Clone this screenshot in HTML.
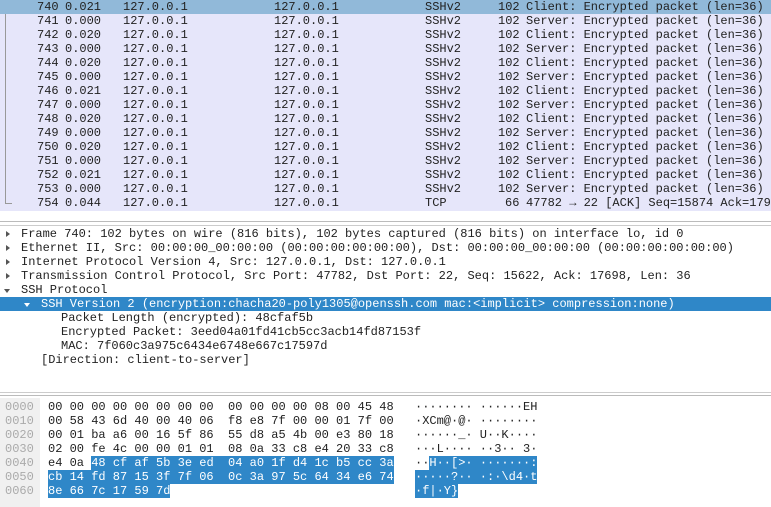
<!DOCTYPE html><html><head><style>
body{margin:0;width:771px;height:507px;overflow:hidden;background:#fff;font-family:"Liberation Mono",monospace;font-size:12px;color:#222}
.r{position:absolute;left:0;width:771px;height:14px;line-height:14px;white-space:pre}
.sel{background:#91b9d9}
.c{position:absolute;top:0}
.hl{background:#2f87c8;color:#fff}
.off{color:#aaa}
.tri{position:absolute;width:0;height:0}
</style></head><body>
<div style="position:absolute;left:0;top:0;width:771px;height:211px;background:#e6e6fa"></div>
<div id="pl"></div>
<div style="position:absolute;left:5px;top:14px;width:1px;height:190px;background:#999"></div>
<div style="position:absolute;left:5px;top:203px;width:7px;height:1px;background:#999"></div>
<div style="position:absolute;left:0;top:221px;width:771px;height:1px;background:#bbb"></div>
<div style="position:absolute;left:0;top:225px;width:771px;height:1px;background:#ccc"></div>
<div id="dt"></div>
<div style="position:absolute;left:0;top:392px;width:771px;height:1px;background:#ccc"></div>
<div style="position:absolute;left:0;top:395px;width:771px;height:1px;background:#bbb"></div>
<div style="position:absolute;left:0;top:398px;width:40px;height:109px;background:#f0f0f0"></div>
<div id="hx"></div>
<script>
var rows=[[740,"0.021","Client"],[741,"0.000","Server"],[742,"0.020","Client"],[743,"0.000","Server"],[744,"0.020","Client"],[745,"0.000","Server"],[746,"0.021","Client"],[747,"0.000","Server"],[748,"0.020","Client"],[749,"0.000","Server"],[750,"0.020","Client"],[751,"0.000","Server"],[752,"0.021","Client"],[753,"0.000","Server"],[754,"0.044",""]];
var h="";
rows.forEach(function(r,i){
var tcp=r[0]==754;
h+='<div class="r '+(i==0?'sel':'')+'" style="top:'+(i*14)+'px">'+
'<span class="c" style="left:37px">'+r[0]+'</span><span class="c" style="left:65px">'+r[1]+'</span>'+
'<span class="c" style="left:123px">127.0.0.1</span><span class="c" style="left:274px">127.0.0.1</span>'+
'<span class="c" style="left:425px">'+(tcp?'TCP':'SSHv2')+'</span>'+
'<span class="c" style="left:'+(tcp?505:498)+'px">'+(tcp?'66':'102')+'</span>'+
'<span class="c" style="left:526px">'+(tcp?'47782 → 22 [ACK] Seq=15874 Ack=179':r[2]+': Encrypted packet (len=36)')+'</span></div>';
});
document.getElementById('pl').innerHTML=h;
var d=[[21,"Frame 740: 102 bytes on wire (816 bits), 102 bytes captured (816 bits) on interface lo, id 0",1],
[21,"Ethernet II, Src: 00:00:00_00:00:00 (00:00:00:00:00:00), Dst: 00:00:00_00:00:00 (00:00:00:00:00:00)",1],
[21,"Internet Protocol Version 4, Src: 127.0.0.1, Dst: 127.0.0.1",1],
[21,"Transmission Control Protocol, Src Port: 47782, Dst Port: 22, Seq: 15622, Ack: 17698, Len: 36",1],
[21,"SSH Protocol",2],
[41,"SSH Version 2 (encryption:chacha20-poly1305@openssh.com mac:<implicit> compression:none)",3],
[61,"Packet Length (encrypted): 48cfaf5b",0],
[61,"Encrypted Packet: 3eed04a01fd41cb5cc3acb14fd87153f",0],
[61,"MAC: 7f060c3a975c6434e6748e667c17597d",0],
[41,"[Direction: client-to-server]",0]];
h="";
d.forEach(function(x,i){
var t=227+i*14,cls=x[2]==3?' hl':'';
var tri='';
if(x[2]==1)tri='<span class="tri" style="left:6px;top:4px;border-left:4px solid #555;border-top:3px solid transparent;border-bottom:3px solid transparent"></span>';
if(x[2]==2)tri='<span class="tri" style="left:4px;top:6px;border-top:4px solid #555;border-left:3px solid transparent;border-right:3px solid transparent"></span>';
if(x[2]==3)tri='<span class="tri" style="left:24px;top:6px;border-top:4px solid #fff;border-left:3px solid transparent;border-right:3px solid transparent"></span>';
h+='<div class="r'+cls+'" style="top:'+t+'px">'+tri+'<span class="c" style="left:'+x[0]+'px">'+x[1].replace(/</g,'&lt;')+'</span></div>';
});
document.getElementById('dt').innerHTML=h;
var hx=[["0000","00 00 00 00 00 00 00 00  00 00 00 00 08 00 45 48","········ ······EH"],
["0010","00 58 43 6d 40 00 40 06  f8 e8 7f 00 00 01 7f 00","·XCm@·@· ········"],
["0020","00 01 ba a6 00 16 5f 86  55 d8 a5 4b 00 e3 80 18","······_· U··K····"],
["0030","02 00 fe 4c 00 00 01 01  08 0a 33 c8 e4 20 33 c8","···L···· ··3·· 3·"],
["0040","e4 0a <b>48 cf af 5b 3e ed  04 a0 1f d4 1c b5 cc 3a</b>","··<b>H··[>· ·······:</b>"],
["0050","<b>cb 14 fd 87 15 3f 7f 06  0c 3a 97 5c 64 34 e6 74</b>","<b>·····?·· ·:·\\d4·t</b>"],
["0060","<b>8e 66 7c 17 59 7d</b>","<b>·f|·Y}</b>"]];
h="";
hx.forEach(function(x,i){
var t=400+i*14;
h+='<div class="r" style="top:'+t+'px"><span class="c off" style="left:5px">'+x[0]+'</span><span class="c" style="left:48px">'+x[1]+'</span><span class="c" style="left:415px">'+x[2]+'</span></div>';
});
document.getElementById('hx').innerHTML=h.replace(/<b>/g,'<span class="hl">').replace(/<\/b>/g,'</span>');
</script>
</body></html>
